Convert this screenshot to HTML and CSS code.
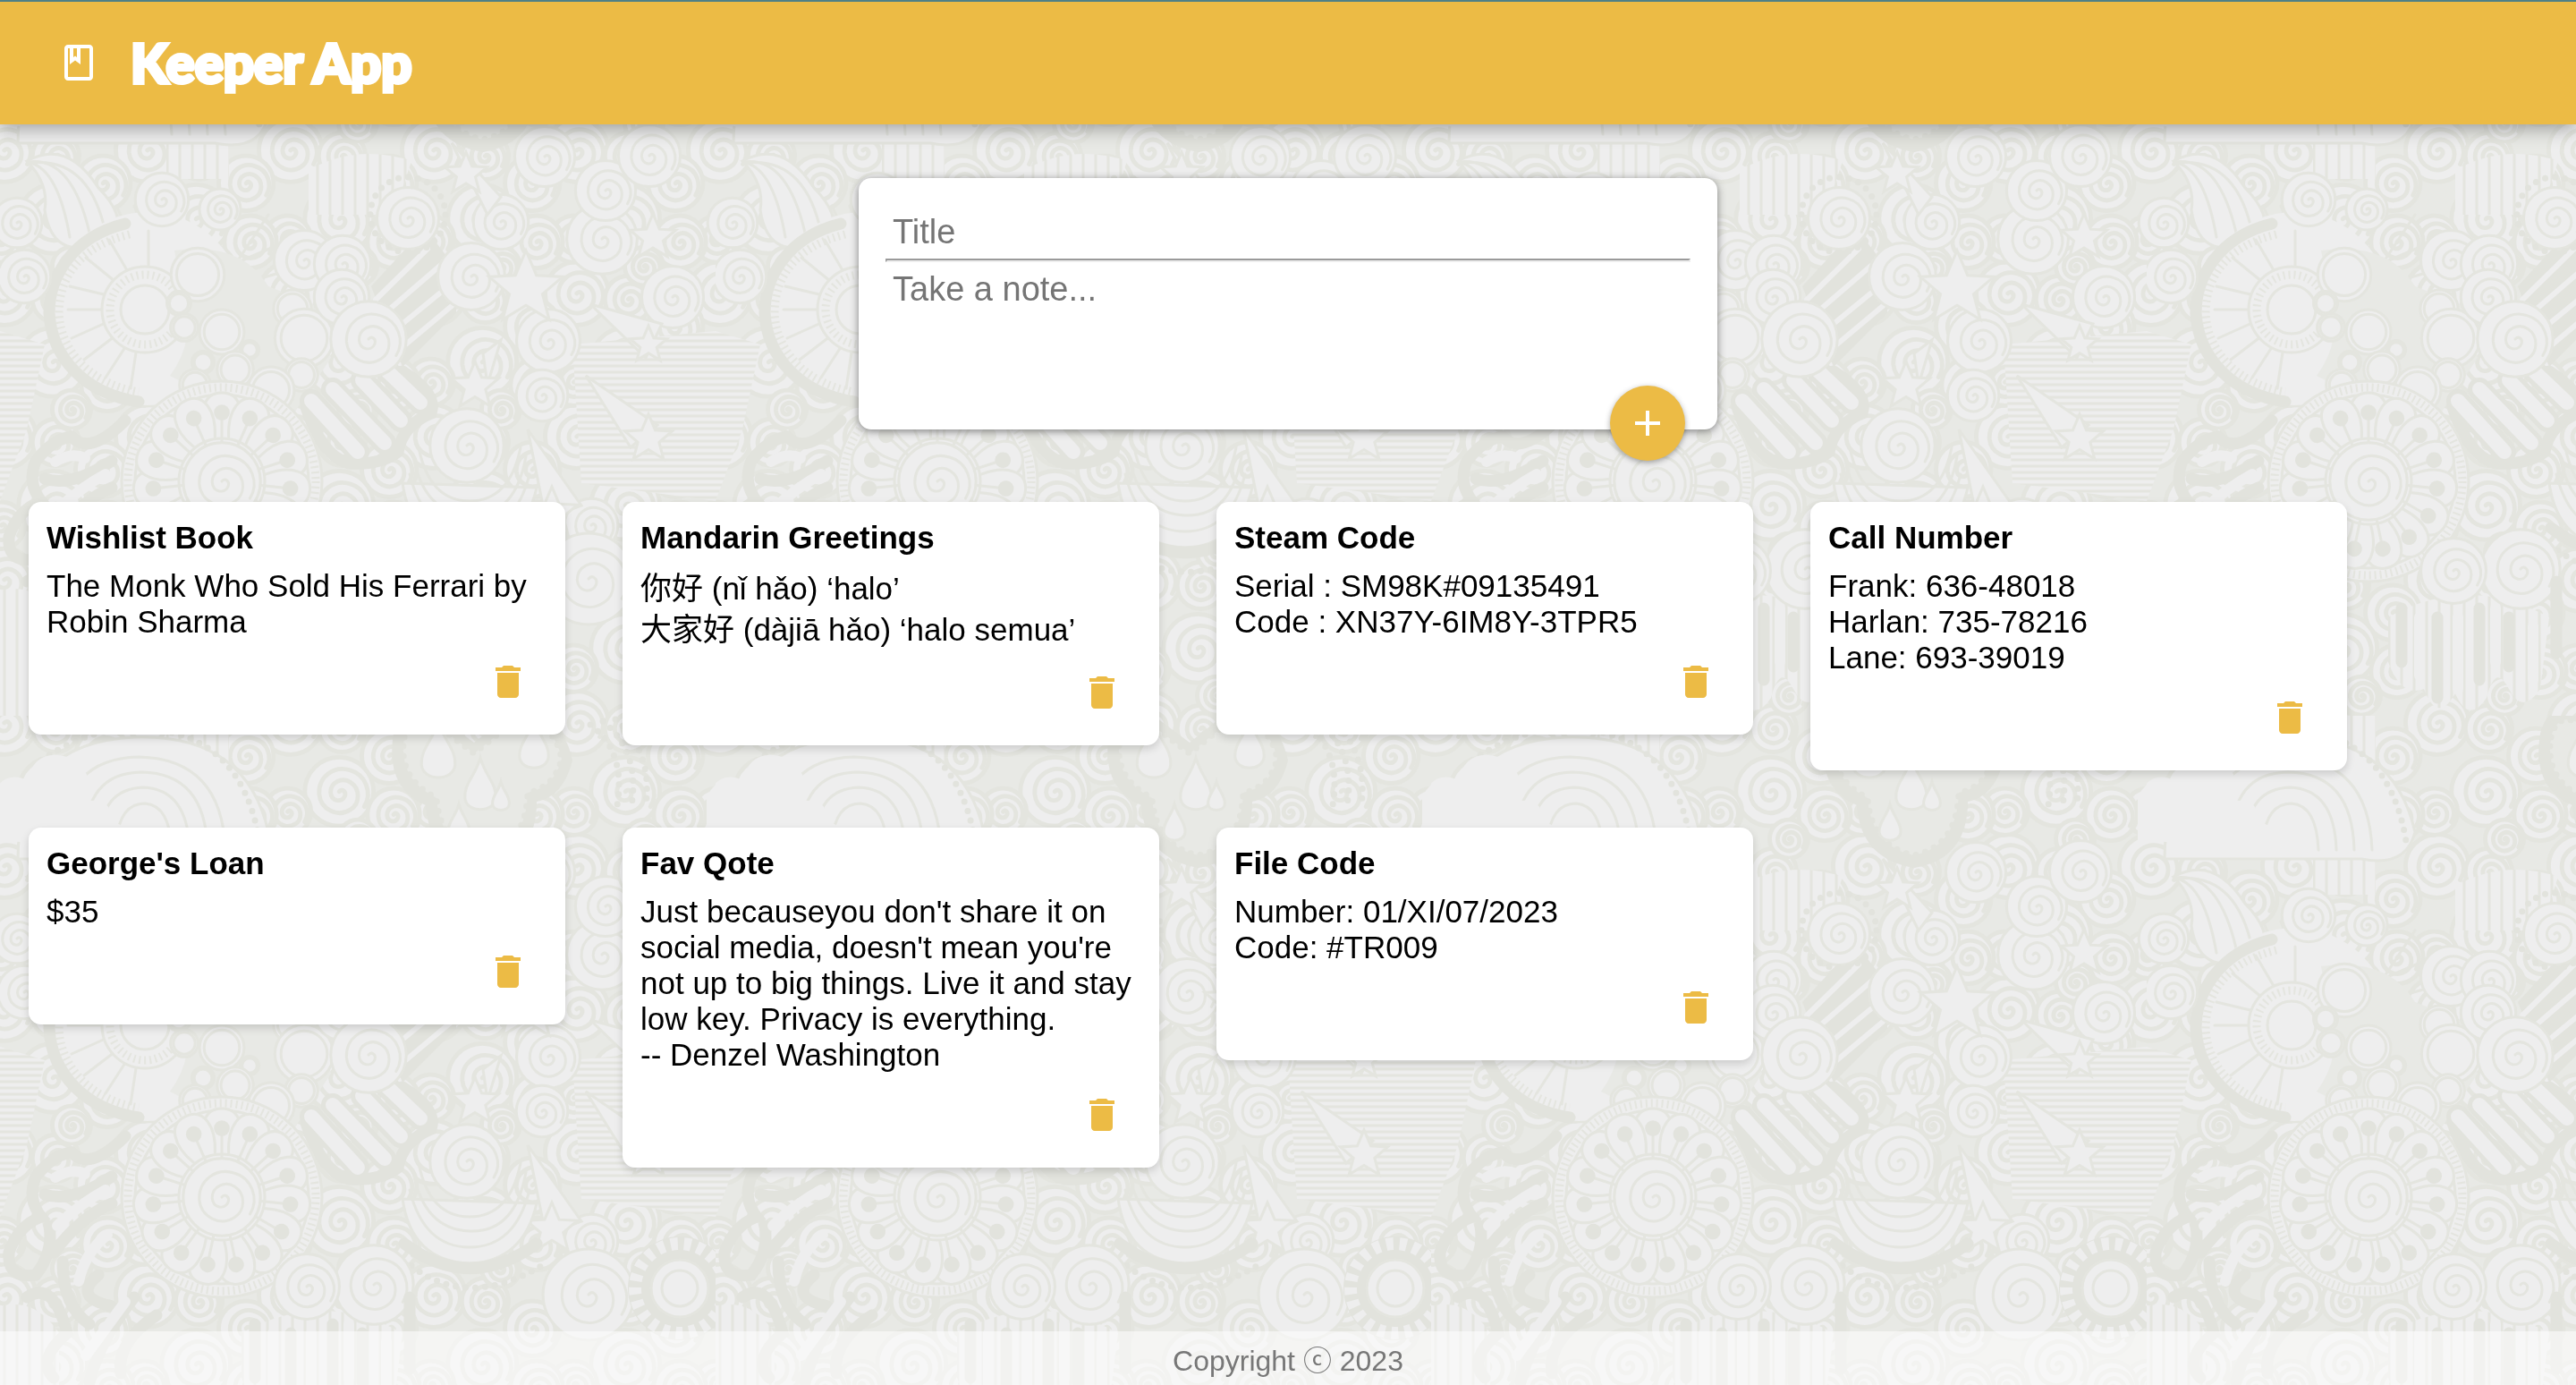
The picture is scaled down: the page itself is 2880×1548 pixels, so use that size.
FILE: index.html
```
<!DOCTYPE html>
<html lang="en">
<head>
<meta charset="utf-8">
<meta name="viewport" content="width=device-width, initial-scale=1">
<title>Keeper App</title>
<link rel="stylesheet" href="styles.css">
</head>
<body>
<svg class="doodles" aria-hidden="true" width="100%" height="100%">
  <defs>
    <symbol id="icon-trash" viewBox="0 0 24 24"><path d="M6 19c0 1.100.9 2 2 2h8c1.100 0 2-.9 2-2V7H6v12zM19 4h-3.500l-1-1h-5l-1 1H5v2h14V4z"/></symbol>
    <symbol id="curl" viewBox="-50 -50 100 100" overflow="visible">
      <circle r="48" class="light line"/>
      <path class="line" d="M0 0c4-5 10 0 8 6c-4 10-19 8-20-5c0-14 16-22 28-14c14 9 13 30 0 38c-18 12-42 0-44-22c-1-24 21-40 43-33c22 6 32 32 20 51"/>
    </symbol>
    <symbol id="ring" viewBox="-50 -50 100 100" overflow="visible">
      <circle r="48" class="light line"/><circle r="38" class="line"/>
    </symbol>
    <symbol id="star" viewBox="-50 -50 100 100" overflow="visible">
      <path class="light line" d="M0-50L14-17L49-15L22 8L31 42L0 23L-31 42L-22 8L-49-15L-14-17Z"/>
    </symbol>
    <symbol id="petal" viewBox="-50 -50 100 100" overflow="visible">
      <path class="light line" d="M-6-22C-12-34-10-45 0-45S12-34 6-22"/><path class="line" d="M0-20V-32"/><circle cy="-35" r="4" class="dark"/>
    </symbol>
    <symbol id="drop" viewBox="-50 -50 100 100" overflow="visible">
      <path class="light line" d="M0-50C8-20 28-6 26 18C24 44-24 44-26 18C-28-6-8-20 0-50Z"/>
    </symbol>
    <pattern id="curls" width="160" height="160" viewBox="0 0 100 100" patternUnits="userSpaceOnUse">
      <rect width="100" height="100" class="mid"/>
      <use href="#curl" x="-20" y="-18" width="46" height="46"/>
      <use href="#curl" x="80" y="-18" width="46" height="46"/>
      <use href="#curl" x="-20" y="82" width="46" height="46"/>
      <use href="#curl" x="80" y="82" width="46" height="46"/>
      <use href="#curl" x="22" y="-8" width="34" height="34"/>
      <use href="#curl" x="22" y="92" width="34" height="34"/>
      <use href="#curl" x="52" y="8" width="40" height="40"/>
      <use href="#curl" x="12" y="28" width="50" height="50"/>
      <use href="#curl" x="-16" y="50" width="34" height="34"/>
      <use href="#curl" x="84" y="50" width="34" height="34"/>
      <use href="#curl" x="56" y="50" width="38" height="38"/>
      <use href="#curl" x="36" y="72" width="28" height="28"/>
    </pattern>
    <pattern id="hatch" width="8" height="7" patternUnits="userSpaceOnUse">
      <rect width="8" height="7" class="light"/><path class="line" d="M0 3h8"/>
    </pattern>
    <pattern id="bars" width="14" height="8" patternUnits="userSpaceOnUse">
      <rect width="14" height="8" class="light"/><path class="line" d="M5 0v8"/>
    </pattern>
    <pattern id="doodle-tile" width="800" height="800" patternUnits="userSpaceOnUse">
      <rect width="800" height="800" fill="url(#curls)"/>

      <!-- hatched areas and rays -->
      <path fill="url(#hatch)" d="M640 385L800 370V560L650 540Z"/>
      <path fill="url(#hatch)" d="M0 370L50 385L30 480L0 560Z"/>
      <path fill="url(#bars)" d="M186 0H256V200H186ZM0 660Q40 650 66 690V800H0ZM270 690Q360 640 450 690L440 770Q420 800 405 770Q390 740 380 780Q360 810 345 775Q325 810 310 770Q285 780 270 740Z"/>
      <path fill="url(#bars)" d="M345 190Q400 160 460 180L440 240H345Z"/>
      <path class="light line" d="M130 230L180 340M150 230L190 330M200 240L175 330M230 240L190 330M300 240L240 330M250 300L320 270M260 320L330 300"/>

      <!-- feathers, upper left -->
      <path class="light line" d="M30 180Q75 155 110 210Q140 240 130 265Q60 300 50 235Q55 205 30 180Z"/>
      <path class="line" d="M32 181Q80 175 100 260M34 182Q100 175 118 260M34 182Q65 190 78 265"/>

      <!-- half wheel with hearts -->
      <circle cx="165" cy="345" r="108" class="light"/>
      <path class="bold" d="M140 250C80 265 55 310 55 350C58 400 95 440 155 449"/>
      <path class="beads" d="M145 262C90 275 66 310 66 350C68 395 105 430 155 438"/>
      <path class="line" d="M120 330L78 320M118 346H76M120 360L80 378M128 376L94 402M140 388L118 422M152 394L146 434M128 314L96 288M142 302L122 268M166 296V258"/>
      <circle cx="162" cy="346" r="48" class="light line"/><circle cx="162" cy="346" r="39" class="beads"/><circle cx="162" cy="346" r="27" class="light line"/>
      <path class="mid" d="M195 280Q270 270 300 320L350 340L370 400L330 460L250 450L190 420Q220 380 205 330Z"/>
      <use href="#ring" x="190" y="276" width="62" height="62"/><use href="#ring" x="186" y="325" width="28" height="28"/>
      <use href="#ring" x="190" y="350" width="32" height="32"/><use href="#ring" x="222" y="345" width="52" height="52"/>
      <use href="#ring" x="268" y="380" width="22" height="22"/><use href="#ring" x="242" y="392" width="42" height="42"/>
      <use href="#ring" x="214" y="392" width="26" height="26"/><use href="#ring" x="305" y="323" width="44" height="44"/>
      <use href="#ring" x="306" y="344" width="68" height="68"/><use href="#ring" x="318" y="400" width="38" height="38"/>
      <use href="#ring" x="200" y="412" width="36" height="36"/><use href="#ring" x="276" y="406" width="54" height="60"/>

      <!-- dark diagonal bars and fingers -->
      <path class="dark" d="M415 320L475 255L510 300V350L450 410Z"/>
      <path class="pale" d="M420 335L478 278M428 352L500 290M440 370L506 316M450 388L505 342"/>
      <path class="bold" d="M342 455Q360 510 390 518Q425 520 445 505Q450 475 482 462Q490 440 450 415"/>
      <path class="finger-edge" d="M348 448L400 505M372 435L430 495M405 425L448 470M430 412L470 450"/>
      <path class="finger" d="M348 448L400 505M372 435L430 495M405 425L448 470M430 412L470 450"/>

      <!-- large curls -->
      <use href="#curl" x="150" y="192" width="62" height="62"/><use href="#curl" x="222" y="210" width="48" height="48"/>
      <use href="#curl" x="305" y="256" width="70" height="70"/><use href="#curl" x="350" y="262" width="66" height="66"/>
      <use href="#curl" x="350" y="300" width="64" height="64"/><use href="#curl" x="368" y="335" width="88" height="88"/>
      <use href="#curl" x="420" y="208" width="72" height="72"/><circle cx="456" cy="240" r="42" class="dots"/>
      <use href="#curl" x="488" y="270" width="78" height="78"/><use href="#curl" x="528" y="216" width="64" height="64"/>
      <use href="#curl" x="632" y="226" width="82" height="82"/><use href="#curl" x="642" y="178" width="70" height="70"/>
      <use href="#curl" x="574" y="140" width="70" height="70"/><use href="#curl" x="690" y="138" width="72" height="72"/>
      <use href="#curl" x="716" y="296" width="72" height="72"/><use href="#curl" x="576" y="344" width="74" height="74"/>
      <use href="#curl" x="576" y="412" width="60" height="60"/><use href="#curl" x="-4" y="278" width="62" height="62"/>
      <use href="#curl" x="630" y="556" width="62" height="62"/><use href="#curl" x="790" y="220" width="58" height="58"/>
      <use href="#curl" x="-10" y="220" width="58" height="58"/><use href="#curl" x="474" y="455" width="96" height="86"/>

      <!-- shooting stars -->
      <path class="light line" d="M660 340L740 362L722 400ZM655 420L735 475L705 500ZM590 480L610 580L650 565ZM505 160L545 240L560 220ZM540 395L560 380L545 430Z"/>
      <use href="#star" x="546" y="274" width="84" height="96"/><use href="#star" x="704" y="238" width="52" height="54"/>
      <use href="#star" x="497" y="170" width="48" height="48"/><use href="#star" x="504" y="402" width="54" height="58"/>
      <use href="#star" x="704" y="364" width="42" height="42"/><use href="#star" x="698" y="462" width="54" height="56"/>
      <use href="#star" x="588" y="544" width="58" height="58"/>

      <!-- big flower -->
      <circle cx="248" cy="538" r="112" class="light line"/><circle cx="248" cy="538" r="105" class="beads"/><circle cx="248" cy="538" r="97" class="line"/>
      <g id="petals-a">
        <use href="#petal" x="138" y="428" width="220" height="220"/>
        <use href="#petal" x="138" y="428" width="220" height="220" transform="rotate(24 248 538)"/>
        <use href="#petal" x="138" y="428" width="220" height="220" transform="rotate(48 248 538)"/>
      </g>
      <use href="#petals-a" transform="rotate(72 248 538)"/><use href="#petals-a" transform="rotate(144 248 538)"/>
      <use href="#petals-a" transform="rotate(216 248 538)"/><use href="#petals-a" transform="rotate(288 248 538)"/>
      <use href="#curl" x="203" y="493" width="90" height="90"/><circle cx="248" cy="538" r="48" class="line"/>

      <!-- dark waves, lower left -->
      <path class="bold" d="M140 470Q100 510 80 488Q60 490 40 515Q30 540 46 560Q20 570 10 600Q8 630 40 625Q60 600 55 570M50 535Q80 545 125 515M60 600Q90 560 125 545M70 610Q70 660 100 680M30 650Q60 630 75 690Q40 720 60 740M110 625Q80 650 125 660M150 650Q110 700 100 745M175 670Q130 700 135 735"/>
      <path class="wide-pale" d="M62 516Q80 505 95 512M64 570Q90 545 118 530M88 632Q95 600 120 580M96 715L140 655"/>

      <!-- arches with hearts, bottom centre -->
      <path class="light line" d="M450 540Q460 610 525 612Q585 610 600 545Z"/>
      <path class="line" d="M468 500Q480 560 525 560T582 500M462 510Q474 574 525 576T588 510M458 530Q474 594 525 594T592 530"/>
      <path class="bold" d="M452 590Q525 645 600 590"/><path class="dots" d="M460 615Q525 665 610 612"/>
      <use href="#curl" x="372" y="590" width="92" height="92"/><use href="#curl" x="305" y="600" width="76" height="76"/>
      <use href="#curl" x="602" y="594" width="112" height="106"/>
      <circle cx="760" cy="640" r="58" class="dark"/><circle cx="760" cy="640" r="50" class="beads-light"/><circle cx="760" cy="640" r="32" class="light line"/>
      <circle cx="760" cy="640" r="20" class="line"/>
      <path class="bold" d="M285 680V740M325 690V780M372 680V760M405 690V745M458 650V730"/>
      <path class="wide-pale" d="M305 690V755M348 690V770M390 680V740M432 700V760"/>

      <!-- cloud and rainbow -->
      <path class="light line" d="M20 160Q20 30 150 24Q275 20 300 130Q290 170 240 160Z"/>
      <path class="dots" d="M46 50Q100 12 160 14Q270 20 290 140"/>
      <path class="line" d="M70 140Q70 48 155 46Q248 48 252 150M95 140Q95 64 158 63Q230 64 232 150M112 140Q112 82 160 80Q210 82 212 150M130 140Q134 98 162 98Q190 100 192 150"/>
      <path class="light" d="M-10 140V90Q4 60 30 72Q40 36 75 46Q105 58 100 95Q125 92 125 118Q150 125 140 145Z"/>
      <path class="light" d="M790 140V90Q798 76 810 70V140Z"/>

      <!-- raindrops -->
      <path class="dark" d="M440 20Q450-20 490 0L530 30L580-10Q630 0 640 50Q630 90 600 96Q600 160 540 170Q480 160 476 100Q430 80 440 20Z"/>
      <path class="mid dots" d="M452 24Q460-8 490 12L530 42L580 2Q620 8 628 48Q620 80 590 86Q588 146 540 156Q492 146 488 92Q444 70 452 24Z"/>
      <use href="#drop" x="454" y="4" width="72" height="76"/><use href="#drop" x="504" y="40" width="66" height="80"/>
      <use href="#drop" x="566" y="0" width="62" height="70"/><use href="#drop" x="542" y="60" width="36" height="64"/><use href="#drop" x="490" y="92" width="46" height="60"/>
      <path class="dots" d="M660 10Q700 40 690 100M674 6Q716 40 706 100M688 4Q730 40 722 100"/>
    </pattern>
  </defs>
  <rect width="100%" height="100%" fill="url(#doodle-tile)"/>
</svg>

<header class="header">
  <svg class="icon header-icon" viewBox="0 0 24 24" aria-hidden="true"><path d="M18 2H6c-1.100 0-2 .9-2 2v16c0 1.100.9 2 2 2h12c1.100 0 2-.9 2-2V4c0-1.100-.9-2-2-2zM9 4h2v5l-1-.75L9 9V4zm9 16H6V4h1v9l3-2.250L13 13V4h5v16z"/></svg>
  <h1 class="brand">Keeper App</h1>
</header>

<main class="main">
  <form class="create-note">
    <input class="field title-field" type="text" name="title" placeholder="Title" aria-label="Title">
    <hr class="divider">
    <textarea class="field note-field" name="content" rows="3" placeholder="Take a note..." aria-label="Take a note"></textarea>
    <button class="add-button" type="button" aria-label="Add note">
      <svg class="icon" viewBox="0 0 24 24" aria-hidden="true"><path d="M19 13h-6v6h-2v-6H5v-2h6V5h2v6h6v2z"/></svg>
    </button>
  </form>

  <section class="notes" aria-label="Notes">
    <article class="note">
      <h2 class="note-title">Wishlist Book</h2>
      <p class="note-text">The Monk Who Sold His Ferrari by Robin Sharma</p>
      <button class="delete-button" type="button" aria-label="Delete note"><svg class="icon" aria-hidden="true"><use href="#icon-trash"/></svg></button>
    </article>
    <article class="note">
      <h2 class="note-title">Mandarin Greetings</h2>
      <p class="note-text note-text-cjk"><span lang="zh">你好</span> (nǐ hǎo) ‘halo’<br><span lang="zh">大家好</span> (dàjiā hǎo) ‘halo semua’</p>
      <button class="delete-button" type="button" aria-label="Delete note"><svg class="icon" aria-hidden="true"><use href="#icon-trash"/></svg></button>
    </article>
    <article class="note">
      <h2 class="note-title">Steam Code</h2>
      <p class="note-text">Serial : SM98K#09135491<br>Code : XN37Y-6IM8Y-3TPR5</p>
      <button class="delete-button" type="button" aria-label="Delete note"><svg class="icon" aria-hidden="true"><use href="#icon-trash"/></svg></button>
    </article>
    <article class="note">
      <h2 class="note-title">Call Number</h2>
      <p class="note-text">Frank: 636-48018<br>Harlan: 735-78216<br>Lane: 693-39019</p>
      <button class="delete-button" type="button" aria-label="Delete note"><svg class="icon" aria-hidden="true"><use href="#icon-trash"/></svg></button>
    </article>
    <article class="note">
      <h2 class="note-title">George's Loan</h2>
      <p class="note-text">$35</p>
      <button class="delete-button" type="button" aria-label="Delete note"><svg class="icon" aria-hidden="true"><use href="#icon-trash"/></svg></button>
    </article>
    <article class="note">
      <h2 class="note-title">Fav Qote</h2>
      <p class="note-text">Just becauseyou don't share it on social media, doesn't mean you're not up to big things. Live it and stay low key. Privacy is everything.<br>-- Denzel Washington</p>
      <button class="delete-button" type="button" aria-label="Delete note"><svg class="icon" aria-hidden="true"><use href="#icon-trash"/></svg></button>
    </article>
    <article class="note">
      <h2 class="note-title">File Code</h2>
      <p class="note-text">Number: 01/XI/07/2023<br>Code: #TR009</p>
      <button class="delete-button" type="button" aria-label="Delete note"><svg class="icon" aria-hidden="true"><use href="#icon-trash"/></svg></button>
    </article>
  </section>
</main>

<footer class="footer"><p class="copyright">Copyright ⓒ 2023</p></footer>
</body>
</html>
```

FILE: styles.css
```
:root {
  --gold: #ecbb45;
  --sans: "Liberation Sans", Arial, "Noto Sans CJK SC", sans-serif;
}

* {
  box-sizing: border-box;
}

body {
  margin: 0;
  min-height: 100vh;
  display: flex;
  flex-direction: column;
  background: #eeeeee;
  color: #000;
  font-family: var(--sans);
}

/* Doodle wallpaper behind the whole page */
.doodles {
  position: fixed;
  inset: 0;
  z-index: -1;
}

.light { fill: #eeeeee; }
.mid { fill: #e8e9e5; }
.dark { fill: #e2e3dd; }

.line,
.bold,
.beads,
.beads-light,
.dots,
.pale,
.wide-pale,
.finger,
.finger-edge {
  stroke: #e4e5df;
  stroke-width: 3px;
  stroke-linecap: round;
  vector-effect: non-scaling-stroke;
}

.line:not(.light),
.bold,
.beads,
.beads-light,
.dots:not(.mid),
.pale,
.wide-pale,
.finger,
.finger-edge {
  fill: none;
}

.bold { stroke: #e2e3dd; stroke-width: 13px; }
.beads { stroke-width: 9px; stroke-dasharray: 2 4; stroke-linecap: butt; }
.beads-light { stroke: #eeeeee; stroke-width: 14px; stroke-dasharray: 8 7; stroke-linecap: butt; }
.dots { stroke: #e2e3dd; stroke-width: 7px; stroke-dasharray: 0 11; }
.pale { stroke: #eeeeee; stroke-width: 6px; }
.wide-pale { stroke: #eeeeee; stroke-width: 12px; }
.finger-edge { stroke: #e2e3dd; stroke-width: 26px; }
.finger { stroke: #eeeeee; stroke-width: 16px; }

.icon {
  display: block;
  width: 48px;
  height: 48px;
  fill: currentColor;
}

.header {
  display: flex;
  align-items: center;
  gap: 34px;
  padding: 28px 64px 29px;
  border-top: 2px solid #4f8086;
  background: var(--gold);
  color: #fff;
  box-shadow: 0 4px 20px rgba(0, 0, 0, 0.35);
}

.brand {
  margin: 0;
  font: 900 60px/80px Lato, sans-serif;
  -webkit-text-stroke: 4px #fff;
  stroke-linejoin: round;
}

.main {
  flex: 1;
}

.create-note {
  position: relative;
  width: 960px;
  max-width: calc(100% - 64px);
  margin: 60px auto 81px;
  padding: 30px 30px 47px;
  border-radius: 14px;
  background: #fff;
  box-shadow: 0 2px 10px rgba(100, 100, 100, 0.8);
}

.field {
  display: block;
  width: 100%;
  padding: 0 8px;
  border: 0;
  outline: 0;
  background: transparent;
  font: 38px/44px var(--sans);
  resize: none;
}

.field::placeholder {
  color: #757575;
}

.title-field {
  height: 60px;
}

.note-field {
  padding-top: 8px;
}

.divider {
  margin: 0;
  border: 2px solid;
  border-color: #9a9a9a #eeeeee #eeeeee #9a9a9a;
}

.add-button {
  position: absolute;
  right: 36px;
  bottom: -35px;
  display: grid;
  place-items: center;
  width: 84px;
  height: 84px;
  padding: 0;
  border: 0;
  border-radius: 50%;
  background: var(--gold);
  color: #fff;
  box-shadow: 0 2px 6px rgba(0, 0, 0, 0.35);
  cursor: pointer;
}

.notes {
  display: grid;
  grid-template-columns: repeat(auto-fill, 600px);
  align-items: start;
  gap: 64px;
  padding: 0 32px 64px;
}

.note {
  padding: 20px;
  border-radius: 14px;
  background: #fff;
  box-shadow: 0 4px 10px rgba(0, 0, 0, 0.15);
}

.note-title {
  margin: 0 0 14px;
  font-size: 35px;
  line-height: 40px;
}

.note-text {
  margin: 0;
  font-size: 35px;
  line-height: 40px;
}

.note-text-cjk {
  line-height: 46px;
}

.delete-button {
  display: block;
  margin: 0 0 0 auto;
  padding: 23px 20px 15px;
  border: 0;
  background: none;
  color: var(--gold);
  cursor: pointer;
}

.footer {
  padding: 13px 32px 7px;
  background: rgba(255, 255, 255, 0.55);
  text-align: center;
}

.copyright {
  margin: 0;
  color: #777;
  font: 32px/40px "Liberation Sans", Arial, "Noto Sans CJK JP", sans-serif;
}
```
